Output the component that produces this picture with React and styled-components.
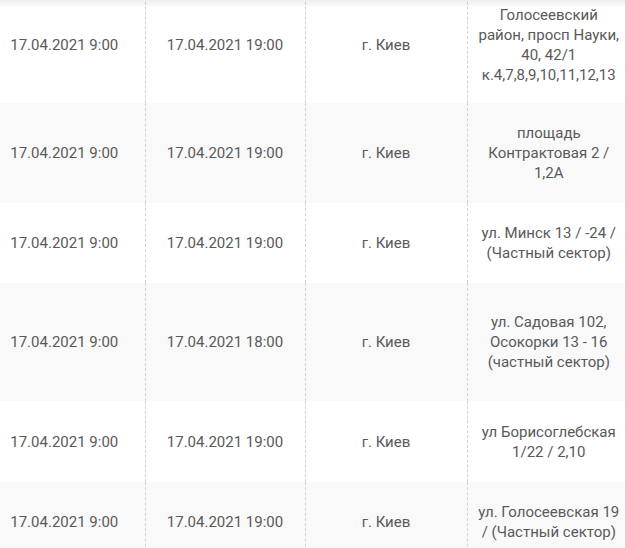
import React from 'react';
import styled, { createGlobalStyle } from 'styled-components';

const GlobalStyle = createGlobalStyle`
  html, body {
    margin: 0;
    padding: 0;
    background: #fff;
    overflow: hidden;
  }
`;

const Viewport = styled.div`
  position: relative;
  width: 625px;
  height: 548px;
  overflow: hidden;
  font-family: Roboto, 'Liberation Sans', sans-serif;

  &::after {
    content: '';
    position: absolute;
    top: 0;
    left: 0;
    right: 0;
    height: 8px;
    background: linear-gradient(rgba(0, 0, 0, 0.07), rgba(0, 0, 0, 0));
    pointer-events: none;
  }
`;

const Table = styled.table`
  margin: -13px 0 0 -16px;
  width: 646px;
  table-layout: fixed;
  border-collapse: collapse;
  border-spacing: 0;
`;

const Col = styled.col`
  width: ${(p) => p.$width}px;
`;

const Row = styled.tr`
  background: ${(p) => (p.$striped ? '#f9f9f9' : '#fff')};
`;

const Cell = styled.td`
  height: ${(p) => p.$height}px;
  padding: 0 10px;
  box-sizing: border-box;
  text-align: center;
  vertical-align: middle;
  font-size: 15px;
  line-height: 20px;
  color: #595959;
  border-left: 1px dashed #d3d3d3;

  &:first-child {
    border-left: none;
  }
`;

const columns = [161, 160, 162, 163];

const rows = [
  { start: '17.04.2021 9:00', end: '17.04.2021 19:00', city: 'г. Киев', address: 'Голосеевский район, просп Науки, 40, 42/1 к.4,7,8,9,10,11,12,13', height: 116 },
  { start: '17.04.2021 9:00', end: '17.04.2021 19:00', city: 'г. Киев', address: 'площадь Контрактовая 2 / 1,2А', height: 100 },
  { start: '17.04.2021 9:00', end: '17.04.2021 19:00', city: 'г. Киев', address: 'ул. Минск 13 / -24 / (Частный сектор)', height: 80 },
  { start: '17.04.2021 9:00', end: '17.04.2021 18:00', city: 'г. Киев', address: 'ул. Садовая 102, Осокорки 13 - 16 (частный сектор)', height: 118 },
  { start: '17.04.2021 9:00', end: '17.04.2021 19:00', city: 'г. Киев', address: 'ул Борисоглебская 1/22 / 2,10', height: 81 },
  { start: '17.04.2021 9:00', end: '17.04.2021 19:00', city: 'г. Киев', address: 'ул. Голосеевская 19 / (Частный сектор)', height: 80 },
];

const App = () => (
  <Viewport>
    <GlobalStyle />
    <Table>
      <colgroup>
        {columns.map((w, i) => (
          <Col key={i} $width={w} />
        ))}
      </colgroup>
      <tbody>
        {rows.map((r, i) => (
          <Row key={i} $striped={i % 2 === 1}>
            <Cell $height={r.height}>{r.start}</Cell>
            <Cell $height={r.height}>{r.end}</Cell>
            <Cell $height={r.height}>{r.city}</Cell>
            <Cell $height={r.height}>{r.address}</Cell>
          </Row>
        ))}
      </tbody>
    </Table>
  </Viewport>
);

export default App;
